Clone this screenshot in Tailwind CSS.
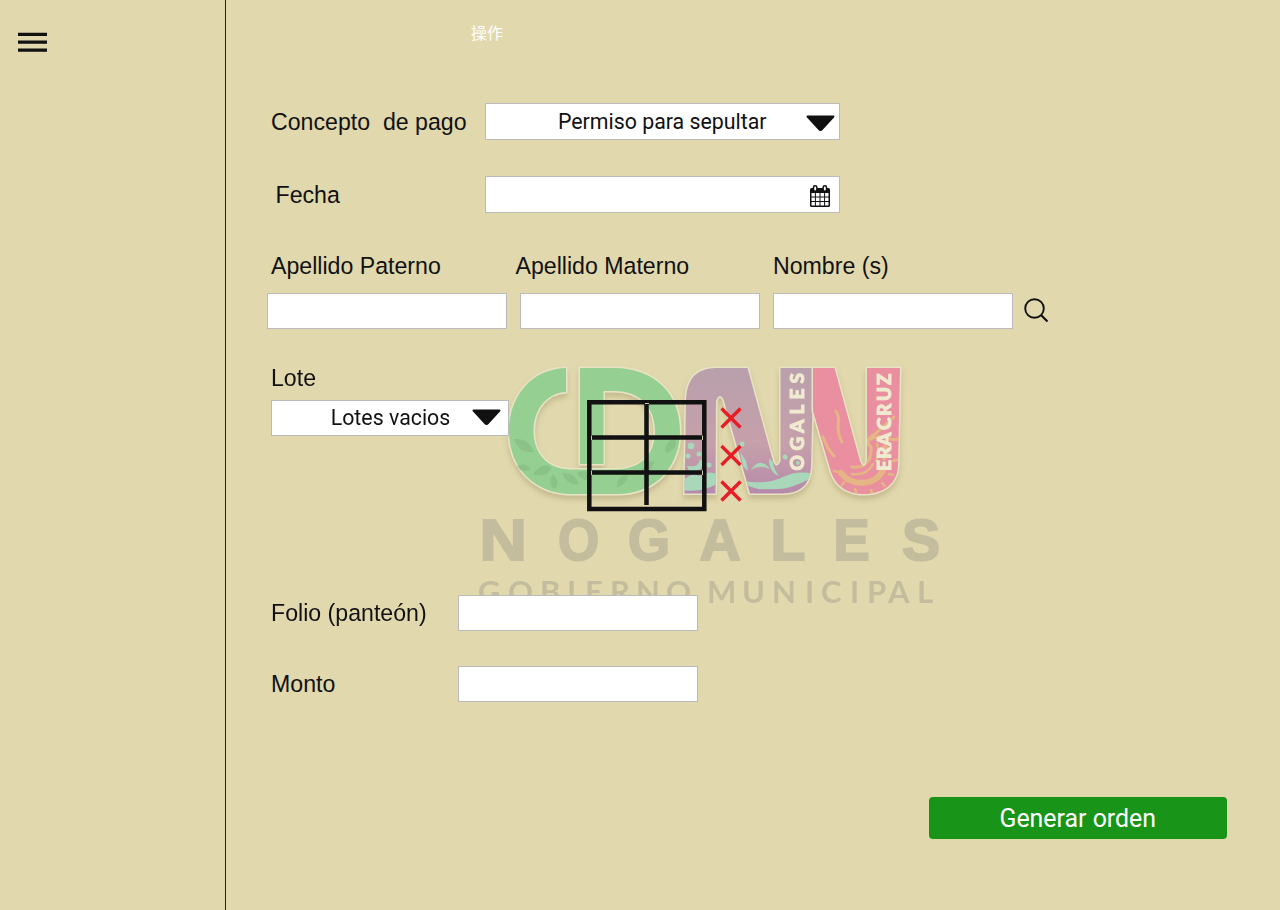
<!DOCTYPE html>
<html lang="es">
<head>
<meta charset="utf-8">
<title>Generar orden</title>
<script src="https://cdn.jsdelivr.net/npm/@tailwindcss/browser@4"></script>
</head>
<body class="flex h-[910px] w-[1280px] overflow-hidden bg-[#e1d8ad] font-['Liberation_Sans',sans-serif] text-[23.15px] leading-[28px] text-[#111]">
<aside class="w-[226px] shrink-0 border-r border-[#222] pl-[18px] pt-[32px]">
  <svg class="block" width="29" height="20" fill="#111"><path d="M0 .7h29v3.200H0zM0 8.600h29v3.200H0zM0 16.600h29v3.200H0z"/></svg>
</aside>
<main class="relative flex flex-1 flex-col">
  <svg class="absolute left-[244px] top-[350px]" width="480" height="265" viewBox="470 350 480 265">
    <defs>
      <linearGradient id="violet" x1="0" y1="0" x2="0" y2="1"><stop offset="0" stop-color="#b8a0ac"/><stop offset=".6" stop-color="#c6a0aa"/><stop offset="1" stop-color="#b68aab"/></linearGradient>
      <filter id="soft" x="-5%" y="-5%" width="110%" height="115%"><feDropShadow dx="0" dy="4" stdDeviation="2.5" flood-color="#9c8f63" flood-opacity=".4"/></filter>
      <filter id="blur" x="-5%" y="-5%" width="110%" height="110%"><feGaussianBlur stdDeviation=".7"/></filter>
      <clipPath id="n1"><path id="n1p" d="M684.500 493.500L686 398Q688 368 716 368H747.500L773 461Q776.500 470 780.500 461V368H813.500L811 468Q809 493.500 782 493.500H750L724 401Q720 391 716 401L715.500 493.500Z"/></clipPath>
      <clipPath id="n2"><path id="n2p" d="M813 368H834.500L860 461Q864 471 867 461V368H900L898 466C897 485 882 494 864 494Q839 494 831 472L813 411Z"/></clipPath>
    </defs>
    <g filter="url(#blur)">
    <g filter="url(#soft)" stroke="#e8e3c4" stroke-width="3" paint-order="stroke" stroke-linejoin="round">
      <path fill="#96cf92" d="M566 368C529 369 509 399 509 431C509 469 536 494 571 494H617C656 494 680 466 680 431C680 394 655 368 614 368H580V464H603.500V391H615C640 391 655 408 655 431C655 455 640 469.500 615 469.500H571C547 469.500 533.500 453 533.500 431C533.500 409 547 393 566 392Z"/>
      <use href="#n1p" fill="url(#violet)"/>
      <use href="#n2p" fill="#e98f9f"/>
    </g>
    <g fill="#86bc83" opacity=".65">
      <path d="M514 439Q529 438 534 452Q519 454 514 439zM533 474Q543 461 552 468Q545 479 533 474zM552 487Q548 480 553 474Q561 482 555 489zM562 473Q575 472 579 484Q567 486 562 473zM577 473Q589 466 593 480Q582 482 577 473zM517 466Q525 462 531 469Q521 474 517 466zM617 487Q616 475 628 475Q627 485 617 487zM640 475Q642 462 654 461Q652 474 640 475zM666 453Q663 443 675 438Q679 449 666 453z"/>
    </g>
    <g clip-path="url(#n1)">
      <path fill="#a8d8b9" d="M683 481Q691 472 699 476Q708 470 717 474V484Q701 493 683 490zM743 481Q767 485 783 477Q798 470 813 474L809 479Q789 491 767 489Q755 490 747 485zM751 470Q760 456 770 469Q759 464 751 470zM769 458L773 462Q774 470 779 476Q769 473 769 458zM687 466Q699 468 700 459L704 463Q700 474 689 471zM740 452L746 461L748 471L743 466z"/>
      <g fill="#a8d8b9"><circle cx="691" cy="446" r="3.300"/><circle cx="699" cy="454" r="2.500"/><circle cx="688" cy="456" r="2.500"/><circle cx="709" cy="465" r="2.500"/><circle cx="742" cy="444" r="2.500"/><circle cx="785" cy="457" r="2.500"/><circle cx="798" cy="463" r="2"/></g>
    </g>
    <g clip-path="url(#n2)" fill="none" stroke="#e5b683" stroke-linecap="round">
      <path stroke-width="3" d="M836 411Q840 417 838 426Q838 435 842 442M823 437Q827 449 834 456M852 467Q872 469 871 447Q863 440 875 434L894 417M869 440Q879 434 887 438Q894 441 900 438M884 446Q893 450 884 459"/>
      <path stroke-width="6" d="M841 473C852 487 876 486 883 470"/>
      <path stroke-width="2.500" d="M852 474Q867 476 873 464M876 461Q880 452 877 444M834 471L839 472M842 485L844 482M856 492L855 489M872 493L871 490M885 486L882 483M893 475L889 474M897 460L893 461"/>
    </g>
    <g fill="#f0ead0" stroke="#f0ead0" stroke-width=".9" class="font-[Lato,sans-serif] font-black" font-size="19">
      <text transform="translate(804 470.500) rotate(-90)" x="0 20 37.500 56 71 87">OGALES</text>
      <text transform="translate(890.500 471) rotate(-90)" x="0 12 25 41 55 70 86">ERACRUZ</text>
    </g>
    <g fill="#c4bd9d">
      <g stroke="#c4bd9d" stroke-width="2" class="font-bold" font-size="57">
        <text transform="translate(479.500 560) scale(1.150 1)">N</text><text transform="translate(558 560) scale(.93 1)">O</text><text transform="translate(628 560) scale(.95 1)">G</text><text x="699.500" y="560">A</text><text x="770.500" y="560">L</text><text transform="translate(833.500 560) scale(.95 1)">E</text><text x="902" y="560">S</text>
      </g>
      <text class="font-[Lato,sans-serif] font-bold" font-size="31" y="602.500" x="478 508 540 567 585 610 636 666 707 742 772 805 821 850 867 888 917">GOBIERNOMUNICIPAL</text>
    </g>
    </g>
  </svg>

  <p class="relative mt-[18px] ml-[245px] h-[28px] font-['Noto_Sans_CJK_SC',sans-serif] text-[16px] text-white">操作</p>

  <div class="relative mt-[57px] ml-[45px] flex h-[37px] items-center">
    <label class="w-[213.500px] whitespace-pre">Concepto  de pago</label>
    <div class="flex h-[37px] w-[355.500px] items-center border border-[#bbb] bg-white pr-[4px] font-[Roboto,sans-serif] text-[21.35px]">
      <span class="flex-1 pl-[33px] text-center">Permiso para sepultar</span>
      <svg class="mt-[4px]" width="29" height="17"><path fill="#111" stroke="#111" stroke-width="2" stroke-linejoin="round" d="M1.500 1.500H27.500L16 14Q14.500 15.800 13 14Z"/></svg>
    </div>
  </div>

  <div class="relative mt-[36px] ml-[45px] flex h-[37px] items-center">
    <label class="w-[213.500px] pl-[4.500px]">Fecha</label>
    <div class="flex h-[37px] w-[355.500px] items-center justify-end border border-[#bbb] bg-white pr-[9px]">
      <svg class="mt-[3px]" width="20" height="22" viewBox="0 0 20 22"><path fill="#111" d="M1.500 3H18.500Q20 3 20 4.500V20.500Q20 22 18.500 22H1.500Q0 22 0 20.500V4.500Q0 3 1.500 3z"/><path fill="#fff" d="M1.500 8h3.400v3.500H1.500zM5.900 8h3.600v3.500H5.900zM10.500 8h3.600v3.500h-3.600zM15.100 8h3.400v3.500h-3.400zM1.500 12.500h3.400v3.500H1.500zM5.900 12.500h3.600v3.500H5.900zM10.500 12.500h3.600v3.500h-3.600zM15.100 12.500h3.400v3.500h-3.400zM1.500 17h3.400v3.500H1.500zM5.900 17h3.600v3.500H5.900zM10.500 17h3.600v3.500h-3.600zM15.100 17h3.400v3.500h-3.400z"/><g fill="#fff" stroke="#111" stroke-width="1.500"><rect x="3.500" y=".8" width="3.400" height="5.400" rx="1.700"/><rect x="13.100" y=".8" width="3.400" height="5.400" rx="1.700"/></g></svg>
    </div>
  </div>

  <div class="relative mt-[39px] ml-[45px] flex h-[28px]">
    <label class="w-[244.500px]">Apellido Paterno</label>
    <label class="w-[257.500px]">Apellido Materno</label>
    <label>Nombre (s)</label>
  </div>
  <div class="relative mt-[13px] ml-[41px] flex h-[36px] items-center">
    <div class="h-[36px] w-[240px] border border-[#bbb] bg-white"></div>
    <div class="ml-[13px] h-[36px] w-[240px] border border-[#bbb] bg-white"></div>
    <div class="ml-[13px] h-[36px] w-[240px] border border-[#bbb] bg-white"></div>
    <svg class="ml-[10.500px] mb-[1px]" width="25" height="26" fill="none" stroke="#111" stroke-width="1.900"><circle cx="10.500" cy="10.500" r="9.300"/><path stroke-width="2.200" d="M17 17L23.500 23.500"/></svg>
  </div>

  <div class="relative mt-[35px] ml-[45px] flex h-[231px]">
    <div class="w-[238px]">
      <label class="block h-[28px]">Lote</label>
      <div class="mt-[8px] flex h-[36px] items-center border border-[#bbb] bg-white pr-[7px] font-[Roboto,sans-serif] text-[21.35px]">
        <span class="flex-1 pl-[37px] text-center">Lotes vacios</span>
        <svg class="mb-[1px]" width="29" height="17"><path fill="#111" stroke="#111" stroke-width="2" stroke-linejoin="round" d="M1.500 1.500H27.500L16 14Q14.500 15.800 13 14Z"/></svg>
      </div>
    </div>
    <svg class="mt-[36px] ml-[77px]" width="122" height="112" fill="none" stroke="#111" stroke-width="4.500"><path d="M3.300 2.300H118.300V109H3.300zM5.500 37.500H116M5.500 72.500H116M60.500 4V105"/><path stroke="#cfcba6" stroke-width="1" d="M5.500 35.500V40M116.500 35.500V40M5.500 70.500V75M116.500 70.500V75M59 3.500H63"/></svg>
    <svg class="mt-[43px] ml-[11.500px]" width="23" height="95" fill="none" stroke="#e81c24" stroke-width="3.300"><path d="M1.500 1.500L20.500 20.500M20.500 1.500L1.500 20.500M1.500 39L20.500 58M20.500 39L1.500 58M1.500 74.500L20.500 93.500M20.500 74.500L1.500 93.500"/></svg>
  </div>

  <div class="relative ml-[45px] flex h-[36px] items-center">
    <label class="w-[187px]">Folio (panteón)</label>
    <div class="h-[36px] w-[240px] border border-[#bbb] bg-white"></div>
  </div>
  <div class="relative mt-[35px] ml-[45px] flex h-[36px] items-center">
    <label class="w-[187px]">Monto</label>
    <div class="h-[36px] w-[240px] border border-[#bbb] bg-white"></div>
  </div>

  <button class="relative mt-[95px] mr-[53.500px] h-[42px] w-[297.500px] self-end rounded-[4px] bg-[#189418] pt-[1px] font-[Roboto,sans-serif] text-[24.900px] text-white">Generar orden</button>
</main>
</body>
</html>
